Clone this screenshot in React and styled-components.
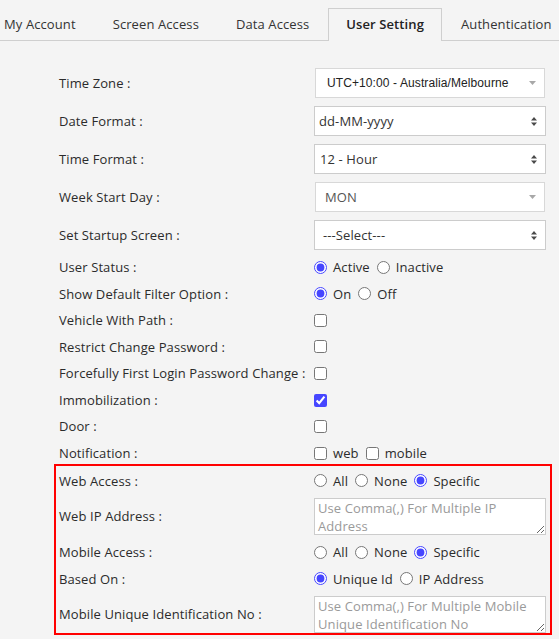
import React from "react";
import styled, { createGlobalStyle, css } from "styled-components";

const GlobalStyle = createGlobalStyle`
  html, body {
    margin: 0;
    padding: 0;
    background: #f4f4f4;
  }
  body {
    font-family: "Open Sans", "Liberation Sans", sans-serif;
    font-size: 13px;
    letter-spacing: 0.1px;
    color: #333;
    overflow: hidden;
  }
  * { box-sizing: border-box; }
`;

const Page = styled.div`
  width: 559px;
  height: 639px;
  overflow: hidden;
  background: #f4f4f4;
`;

const TabBar = styled.div`
  display: flex;
  padding-top: 8px;
  border-bottom: 1px solid #cfcfcf;
  margin-left: -14.5px;
  white-space: nowrap;
`;

const Tab = styled.div`
  height: 32px;
  line-height: 30px;
  padding: 0 17.5px;
  border: 1px solid transparent;
  border-bottom: none;
  margin-bottom: -1px;
  color: #333;
  flex: none;
  ${(p) =>
    p.$active &&
    css`
      background: #f4f4f4;
      border-color: #cfcfcf;
      height: 33px;
      font-weight: 600;
      color: #222;
    `}
`;

const Form = styled.div`
  display: flex;
  flex-direction: column;
  padding: 27px 0 0 59px;
`;

const Row = styled.div`
  display: grid;
  grid-template-columns: 255px 232px;
  align-items: center;
  min-height: 18.57px;
  line-height: 18.57px;
  margin-bottom: 8px;
  &:last-child {
    margin-bottom: 0;
  }
`;

const Label = styled.div`
  color: #2b2b2b;
  white-space: nowrap;
`;

const Highlight = styled.div`
  display: flex;
  flex-direction: column;
  margin: -7px 0 0 -5px;
  width: 498px;
  border: 2px solid #ff0000;
  padding: 6px 4px 0 3px;
`;

const SelectBox = styled.div`
  height: 30px;
  display: flex;
  align-items: center;
  justify-content: space-between;
  background: #fff;
  border: 1px solid ${(p) => (p.$soft ? "#d8d8d8" : "#cccccc")};
  margin: 0 ${(p) => (p.$soft ? "1px" : "0")};
  padding: 0 8px 0 ${(p) => p.$pad}px;
  color: ${(p) => (p.$muted ? "#555" : "#333")};
  white-space: nowrap;
  ${(p) =>
    p.$narrow &&
    css`
      font-family: "Liberation Sans", Arial, sans-serif;
      font-size: 12px;
      letter-spacing: 0.1px;
      color: #222;
    `}
`;

const Options = styled.div`
  display: flex;
  align-items: center;
  gap: 7px;
  white-space: nowrap;
`;

const Option = styled.label`
  display: inline-flex;
  align-items: center;
  gap: 6px;
  color: #2b2b2b;
`;

const Radio = styled.input.attrs({ type: "radio" })`
  margin: 0;
  width: 13px;
  height: 13px;
  accent-color: #4646ff;
`;

const Check = styled.input.attrs({ type: "checkbox" })`
  margin: 0;
  width: 13px;
  height: 13px;
  accent-color: #4646ff;
`;

const Area = styled.textarea`
  display: block;
  width: 232px;
  height: 37px;
  margin: 0;
  padding: 0 3px;
  border: 1px solid #cccccc;
  background: #fff;
  font-family: "Open Sans", "Liberation Sans", sans-serif;
  font-size: 13px;
  letter-spacing: 0.1px;
  line-height: 18px;
  color: #333;
  overflow: hidden;
  border-radius: 0;
  &::placeholder {
    color: #9a9a9a;
  }
`;

const UpDown = () => (
  <svg width="6" height="9" viewBox="0 0 6 9">
    <path d="M3 0 L6 3.5 H0 Z M3 9 L6 5.5 H0 Z" fill="#4a4a4a" />
  </svg>
);

const Down = () => (
  <svg width="7" height="4" viewBox="0 0 7 4">
    <path d="M0 0 H7 L3.5 4 Z" fill="#a8a8a8" />
  </svg>
);

const Select = ({ value, pad = 5, soft, muted, narrow }) => (
  <SelectBox $pad={pad} $soft={soft} $muted={muted} $narrow={narrow}>
    <span>{value}</span>
    {soft ? <Down /> : <UpDown />}
  </SelectBox>
);

const RadioGroup = ({ name, items, checked }) => (
  <Options>
    {items.map((it) => (
      <Option key={it}>
        <Radio name={name} defaultChecked={it === checked} />
        {it}
      </Option>
    ))}
  </Options>
);

const Field = ({ label, children }) => (
  <Row>
    <Label>{label}</Label>
    <div>{children}</div>
  </Row>
);

const tabs = ["My Account", "Screen Access", "Data Access", "User Setting", "Authentication"];

export default function App() {
  return (
    <Page>
      <GlobalStyle />
      <TabBar>
        {tabs.map((t) => (
          <Tab key={t} $active={t === "User Setting"}>
            {t}
          </Tab>
        ))}
      </TabBar>
      <Form>
        <Field label="Time Zone :">
          <Select value="UTC+10:00 - Australia/Melbourne" soft narrow pad={11} />
        </Field>
        <Field label="Date Format :">
          <Select value="dd-MM-yyyy" pad={4} />
        </Field>
        <Field label="Time Format :">
          <Select value="12 - Hour" pad={5} />
        </Field>
        <Field label="Week Start Day :">
          <Select value="MON" soft muted pad={9} />
        </Field>
        <Field label="Set Startup Screen :">
          <Select value="---Select---" pad={8} />
        </Field>
        <Field label="User Status :">
          <RadioGroup name="status" items={["Active", "Inactive"]} checked="Active" />
        </Field>
        <Field label="Show Default Filter Option :">
          <RadioGroup name="filter" items={["On", "Off"]} checked="On" />
        </Field>
        <Field label="Vehicle With Path :">
          <Options><Check /></Options>
        </Field>
        <Field label="Restrict Change Password :">
          <Options><Check /></Options>
        </Field>
        <Field label="Forcefully First Login Password Change :">
          <Options><Check /></Options>
        </Field>
        <Field label="Immobilization :">
          <Options><Check defaultChecked /></Options>
        </Field>
        <Field label="Door :">
          <Options><Check /></Options>
        </Field>
        <Field label="Notification :">
          <Options>
            <Option><Check />web</Option>
            <Option><Check />mobile</Option>
          </Options>
        </Field>
        <Highlight>
          <Field label="Web Access :">
            <RadioGroup name="web" items={["All", "None", "Specific"]} checked="Specific" />
          </Field>
          <Field label="Web IP Address :">
            <Area placeholder="Use Comma(,) For Multiple IP Address" />
          </Field>
          <Field label="Mobile Access :">
            <RadioGroup name="mobile" items={["All", "None", "Specific"]} checked="Specific" />
          </Field>
          <Field label="Based On :">
            <RadioGroup name="based" items={["Unique Id", "IP Address"]} checked="Unique Id" />
          </Field>
          <Field label="Mobile Unique Identification No :">
            <Area placeholder="Use Comma(,) For Multiple Mobile Unique Identification No" />
          </Field>
        </Highlight>
      </Form>
    </Page>
  );
}
